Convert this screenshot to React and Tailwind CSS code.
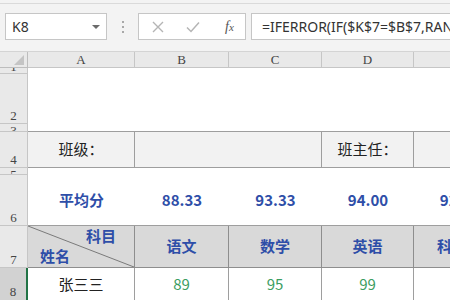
import React from "react";

const cjk = "font-['Microsoft_YaHei','Noto_Sans_CJK_SC',sans-serif]";
const hdr = "font-['Liberation_Serif','Noto_Sans_CJK_SC',serif] text-[13px] text-[#444]";

function Toolbar() {
  return (
    <div className="h-[52px] bg-[#f3f3f3] pt-[3px] border-b border-[#d4d4d4]">
      <div className="h-full border-t border-[#dadada] flex items-start pt-[9px]">
        {/* name box */}
        <div className="ml-[5px] w-[102px] h-[27px] bg-white border border-[#c6c6c6] flex items-center pl-[6px] pr-[6px]">
          <span className="font-['Noto_Sans',sans-serif] text-[14px] text-[#333] leading-none">K8</span>
          <span className="ml-auto w-0 h-0 border-l-[4px] border-r-[4px] border-t-[4px] border-l-transparent border-r-transparent border-t-[#6b6b6b]" />
        </div>
        {/* grip */}
        <div className="w-[31px] h-[27px] flex flex-col items-center justify-center gap-[3px]">
          <span className="w-[2px] h-[2px] bg-[#a8a8a8]" />
          <span className="w-[2px] h-[2px] bg-[#a8a8a8]" />
          <span className="w-[2px] h-[2px] bg-[#a8a8a8]" />
        </div>
        {/* buttons */}
        <div className="w-[108px] h-[27px] bg-white border border-[#c6c6c6] flex items-center">
          <svg width="12" height="12" viewBox="0 0 12 12" className="ml-[13px]">
            <path d="M1 1L11 11M11 1L1 11" stroke="#b5b5b5" strokeWidth="1.4" fill="none" />
          </svg>
          <svg width="14" height="12" viewBox="0 0 14 12" className="ml-[22px]">
            <path d="M1 6.5L5 10.5L13 1.5" stroke="#b5b5b5" strokeWidth="1.5" fill="none" />
          </svg>
          <span className="ml-[25px] font-['Liberation_Serif',serif] italic text-[14px] text-[#555] leading-none">
            f<span className="text-[11px]">x</span>
          </span>
        </div>
        {/* formula */}
        <div className="ml-[5px] flex-1 h-[27px] bg-white border border-[#c6c6c6] border-r-0 flex items-center pl-[10px] overflow-hidden">
          <span className="font-['Noto_Sans',sans-serif] text-[14px] text-[#333] leading-none whitespace-nowrap">
            =IFERROR(IF($K$7=$B$7,RANK(B8,B$8:B$20),""),"")
          </span>
        </div>
      </div>
    </div>
  );
}

export default function App() {
  const rh = "bg-[#e9e9e9] border-r border-b border-[#c6c6c6] flex justify-center overflow-hidden " + hdr;
  const ch = "bg-[#e9e9e9] border-r border-b border-[#c6c6c6] flex items-end justify-center leading-[15px] " + hdr;
  const blue = "text-[#2e4ea8] font-bold text-[15px]";
  const green = "text-[#3b9d61] text-[15px]";
  return (
    <div className={"w-[450px] h-[300px] overflow-hidden bg-white " + cjk}>
      <Toolbar />
      <div className="w-[510px] grid grid-cols-[28px_107px_94px_93px_92px_92px] grid-rows-[16px_6px_50px_8px_36px_7px_51px_42px_40px]">
        {/* column headers */}
        <div className="bg-[#e9e9e9] border-r border-b border-[#bdbdbd] relative">
          <span className="absolute right-[3px] bottom-[2px] w-0 h-0 border-l-[10px] border-t-[10px] border-l-transparent border-t-transparent border-b-0 border-r-0 border-b-[#c4c4c4]" style={{ borderBottomWidth: 10 }} />
        </div>
        <div className={ch}>A</div>
        <div className={ch}>B</div>
        <div className={ch}>C</div>
        <div className={ch}>D</div>
        <div className={ch}>E</div>

        {/* row 1-3 heads */}
        <div className={rh + " items-end leading-[13px]"}>1</div>
        <div className="col-start-2 col-span-5 row-start-2 row-span-3 bg-white border-b border-[#9e9e9e]" />
        <div className={rh + " col-start-1 row-start-3 items-end leading-[15px]"}>2</div>
        <div className={rh + " col-start-1 row-start-4 items-start leading-[13px]"}>3</div>

        {/* row 4 */}
        <div className={rh + " items-end leading-[15px]"}>4</div>
        <div className="bg-[#f2f2f2] border-r border-b border-[#9e9e9e] flex items-center justify-center text-[15px] text-[#222]">班级：</div>
        <div className="col-span-2 bg-[#f2f2f2] border-r border-b border-[#9e9e9e]" />
        <div className="bg-[#f2f2f2] border-r border-b border-[#9e9e9e] flex items-center justify-center text-[15px] text-[#222]">班主任：</div>
        <div className="bg-[#f2f2f2] border-b border-[#9e9e9e]" />

        {/* row 5 */}
        <div className={rh + " items-start leading-[13px]"}>5</div>
        <div className="col-span-5 bg-white" />

        {/* row 6 */}
        <div className={rh + " items-end leading-[15px]"}>6</div>
        <div className={"border-b border-[#9e9e9e] flex items-center justify-center " + blue}>平均分</div>
        <div className={"border-b border-[#9e9e9e] flex items-center justify-center " + blue}>88.33</div>
        <div className={"border-b border-[#9e9e9e] flex items-center justify-center " + blue}>93.33</div>
        <div className={"border-b border-[#9e9e9e] flex items-center justify-center " + blue}>94.00</div>
        <div className={"border-b border-[#9e9e9e] flex items-center justify-center " + blue}>92.67</div>

        {/* row 7 */}
        <div className={rh + " items-end leading-[15px]"}>7</div>
        <div className={"relative bg-[#d9d9d9] border-r border-b border-[#8e8e8e] flex flex-col justify-between " + blue}>
          <svg className="absolute inset-0 w-full h-full" viewBox="0 0 106 41" preserveAspectRatio="none">
            <line x1="0" y1="0" x2="106" y2="41" stroke="#7a7a7a" strokeWidth="1" />
          </svg>
          <span className="relative self-end pr-[18px] leading-[20px]">科目</span>
          <span className="relative self-start pl-[12px] leading-[20px] pb-[1px]">姓名</span>
        </div>
        <div className={"bg-[#d9d9d9] border-r border-b border-[#8e8e8e] flex items-center justify-center " + blue}>语文</div>
        <div className={"bg-[#d9d9d9] border-r border-b border-[#8e8e8e] flex items-center justify-center " + blue}>数学</div>
        <div className={"bg-[#d9d9d9] border-r border-b border-[#8e8e8e] flex items-center justify-center " + blue}>英语</div>
        <div className={"bg-[#d9d9d9] border-b border-[#8e8e8e] flex items-center justify-center pr-[16px] " + blue}>科学</div>

        {/* row 8 */}
        <div className={"bg-[#d2d2d2] border-r-2 border-b border-r-[#217346] border-b-[#c6c6c6] flex justify-center items-end pb-[8px] leading-[15px] " + hdr}>8</div>
        <div className="border-r border-[#9e9e9e] flex items-start justify-center pt-[5px] text-[15px] text-[#222]">张三三</div>
        <div className={"border-r border-[#9e9e9e] flex items-start justify-center pt-[5px] " + green}>89</div>
        <div className={"border-r border-[#9e9e9e] flex items-start justify-center pt-[5px] " + green}>95</div>
        <div className={"border-r border-[#9e9e9e] flex items-start justify-center pt-[5px] " + green}>99</div>
        <div className={"flex items-start justify-center pt-[5px] " + green}>96</div>
      </div>
    </div>
  );
}
